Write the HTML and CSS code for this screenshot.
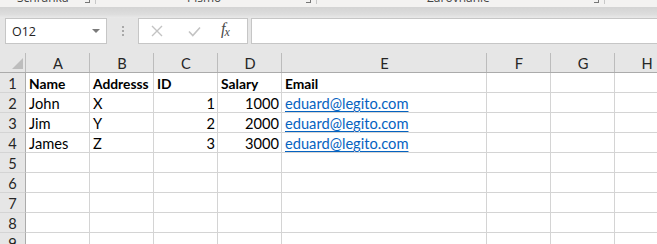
FILE: index.html
```html
<!DOCTYPE html>
<html>
<head>
<meta charset="utf-8">
<link rel="stylesheet" href="styles.css">
</head>
<body>
<div class="ribbon">
  <div class="ribbon-group g1"><span class="glabel">Schránka</span><span class="launch"></span></div>
  <div class="ribbon-group g2"><span class="glabel">Písmo</span><span class="launch"></span></div>
  <div class="ribbon-group g3"><span class="glabel">Zarovnanie</span><span class="launch"></span></div>
</div>
<div class="ribbon-shadow"></div>
<div class="formula-row">
  <div class="namebox"><span>O12</span><svg class="dd" width="8" height="4" viewBox="0 0 8 4"><path d="M0 0h8L4 4z" fill="#7a7a7a"/></svg></div>
  <div class="grip"><i></i><i></i><i></i></div>
  <div class="fbtns">
    <svg class="fb" width="12" height="12" viewBox="0 0 12 12"><path d="M1 1L11 11M11 1L1 11" stroke="#c3c3c3" stroke-width="1.4" fill="none"/></svg>
    <svg class="fb" width="13" height="11" viewBox="0 0 13 11"><path d="M1 5.5L4.8 9.5L12 1.5" stroke="#c3c3c3" stroke-width="1.6" fill="none"/></svg>
    <span class="fx">f<sub>x</sub></span>
  </div>
  <div class="finput"></div>
</div>
<div class="sheet">
  <div class="hd corner"><svg width="11" height="11" viewBox="0 0 11 11"><path d="M11 0V11H0z" fill="#bdbdbd"/></svg></div>
  <div class="hd col">A</div><div class="hd col">B</div><div class="hd col">C</div><div class="hd col">D</div><div class="hd col">E</div><div class="hd col">F</div><div class="hd col">G</div><div class="hd col">H</div>

  <div class="rh">1</div><div class="c b">Name</div><div class="c b">Addresss</div><div class="c b">ID</div><div class="c b">Salary</div><div class="c b">Email</div><div class="c"></div><div class="c"></div><div class="c"></div>
  <div class="rh">2</div><div class="c">John</div><div class="c">X</div><div class="c n">1</div><div class="c n">1000</div><div class="c"><span class="link">eduard@legito.com</span></div><div class="c"></div><div class="c"></div><div class="c"></div>
  <div class="rh">3</div><div class="c">Jim</div><div class="c">Y</div><div class="c n">2</div><div class="c n">2000</div><div class="c"><span class="link">eduard@legito.com</span></div><div class="c"></div><div class="c"></div><div class="c"></div>
  <div class="rh">4</div><div class="c">James</div><div class="c">Z</div><div class="c n">3</div><div class="c n">3000</div><div class="c"><span class="link">eduard@legito.com</span></div><div class="c"></div><div class="c"></div><div class="c"></div>
  <div class="rh">5</div><div class="c"></div><div class="c"></div><div class="c"></div><div class="c"></div><div class="c"></div><div class="c"></div><div class="c"></div><div class="c"></div>
  <div class="rh">6</div><div class="c"></div><div class="c"></div><div class="c"></div><div class="c"></div><div class="c"></div><div class="c"></div><div class="c"></div><div class="c"></div>
  <div class="rh">7</div><div class="c"></div><div class="c"></div><div class="c"></div><div class="c"></div><div class="c"></div><div class="c"></div><div class="c"></div><div class="c"></div>
  <div class="rh">8</div><div class="c"></div><div class="c"></div><div class="c"></div><div class="c"></div><div class="c"></div><div class="c"></div><div class="c"></div><div class="c"></div>
  <div class="rh">9</div><div class="c"></div><div class="c"></div><div class="c"></div><div class="c"></div><div class="c"></div><div class="c"></div><div class="c"></div><div class="c"></div>
</div>
</body>
</html>
```
FILE: styles.css
```css
html, body {
  margin: 0;
  padding: 0;
  width: 657px;
  height: 244px;
  overflow: hidden;
  background: #e6e6e6;
}
body {
  font-family: "Open Sans", "Liberation Sans", sans-serif;
}
.ribbon {
  height: 7px;
  background: #f3f2f1;
  display: flex;
  overflow: hidden;
  font-size: 12px;
  color: #444;
}
.ribbon-group {
  display: flex;
  align-items: flex-start;
  border-right: 1px solid #c8c8c8;
  height: 4px;
}
.glabel {
  line-height: 12px;
  margin-top: -8px;
}
.launch {
  width: 5px;
  height: 4px;
  border-right: 1px solid #777;
  border-bottom: 1px solid #777;
  box-sizing: border-box;
  margin-left: auto;
  margin-right: 5px;
  margin-top: -1px;
}
.g1 { width: 96px; padding-left: 17px; box-sizing: border-box; }
.g2 { width: 221px; padding-left: 91px; box-sizing: border-box; }
.g3 { width: 288px; padding-left: 110px; box-sizing: border-box; }
.ribbon-shadow {
  height: 11px;
  background: linear-gradient(#d3d3d3, #dedede 70%, #e9e9e9);
}
.formula-row {
  display: flex;
  height: 26px;
  padding-left: 5px;
}
.namebox {
  width: 102px;
  box-sizing: border-box;
  background: #fff;
  border: 1px solid #c6c6c6;
  display: flex;
  align-items: center;
  padding: 0 6px 0 6px;
  font-size: 12.5px;
  color: #222;
}
.namebox span { flex: 1; }
.grip {
  width: 31px;
  display: flex;
  flex-direction: column;
  align-items: center;
  justify-content: center;
  gap: 2px;
}
.grip i {
  display: block;
  width: 2px;
  height: 2px;
  background: #a8a8a8;
}
.fbtns {
  width: 110px;
  box-sizing: border-box;
  background: #fff;
  border: 1px solid #c6c6c6;
  display: flex;
  align-items: center;
  padding-left: 12px;
}
.fbtns svg:first-child { margin-right: 25px; }
.fbtns svg:nth-child(2) { margin-right: 20px; }
.fx {
  font-family: "Liberation Serif", serif;
  font-style: italic;
  font-size: 16px;
  color: #4a4a4a;
  line-height: 1;
  margin-top: -3px;
}
.fx sub { font-size: 12px; vertical-align: -2px; margin-left: -1px; }
.finput {
  margin-left: 3px;
  flex: 1;
  background: #fff;
  border: 1px solid #c6c6c6;
  border-right: none;
}
.sheet {
  margin-top: 8px;
  display: grid;
  grid-template-columns: 26px 64px 64px 64px 64px 205px 64px 64px 64px;
  grid-template-rows: 21px;
  grid-auto-rows: 20px;
  font-family: "Lato", "Liberation Sans", sans-serif;
  font-size: 14.67px;
  color: #000;
}
.hd {
  box-sizing: border-box;
  background: #e6e6e6;
  border-bottom: 1px solid #ababab;
  color: #262626;
  display: flex;
  align-items: center;
  justify-content: center;
  padding-top: 3px;
}
.col {
  background: #e6e6e6 linear-gradient(#bcbcbc, #bcbcbc) right bottom / 1px 19px no-repeat;
}
.corner {
  justify-content: flex-end;
  align-items: flex-end;
  padding: 0 3px 3px 0;
  background: #e6e6e6 linear-gradient(#bcbcbc, #bcbcbc) right bottom / 1px 19px no-repeat;
}
.corner svg { display: block; }
.rh {
  box-sizing: border-box;
  background: #e6e6e6;
  border-right: 1px solid #ababab;
  border-bottom: 1px solid #d4d4d4;
  color: #262626;
  display: flex;
  align-items: flex-end;
  justify-content: center;
  line-height: 16px;
}
.c {
  box-sizing: border-box;
  background: #fff;
  border-right: 1px solid #d4d4d4;
  border-bottom: 1px solid #d4d4d4;
  padding: 0 2px 0 3px;
  line-height: 16px;
  display: flex;
  align-items: flex-end;
  white-space: nowrap;
  overflow: visible;
}
.b { font-weight: bold; font-size: 13.8px; }
.n { justify-content: flex-end; }
.link {
  color: #0563c1;
  text-decoration: underline;
  text-underline-offset: 2px;
}
```
